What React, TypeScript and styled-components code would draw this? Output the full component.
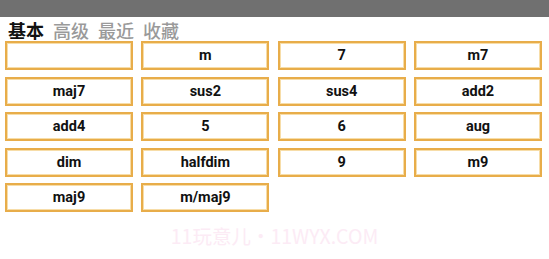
import React from "react";
import styled, { createGlobalStyle } from "styled-components";

const Global = createGlobalStyle`
  html, body { margin: 0; padding: 0; background: #ffffff; }
  body { font-family: Roboto, "Noto Sans CJK SC", "Noto Sans", sans-serif; }
`;

const Page = styled.div`
  width: 549px;
  height: 259px;
  display: flex;
  flex-direction: column;
  overflow: hidden;
`;

const TopBar = styled.div`
  height: 17px;
  background: #707070;
  flex: none;
`;

const Tabs = styled.div`
  display: flex;
  gap: 9px;
  padding: 2px 0 0 8px;
  height: 22px;
  align-items: center;
`;

const Tab = styled.span<{ $active?: boolean }>`
  font-family: "Noto Sans CJK SC", sans-serif;
  font-size: 18px;
  line-height: 22px;
  font-weight: ${(p) => (p.$active ? 700 : 500)};
  color: ${(p) => (p.$active ? "#111111" : "#9a9a9a")};
`;

const Grid = styled.div`
  display: grid;
  grid-template-columns: repeat(4, 1fr);
  grid-auto-rows: 29px;
  column-gap: 8.3px;
  row-gap: 6.5px;
  padding: 0 7px 0 5px;
`;

const ChordButton = styled.div`
  box-sizing: border-box;
  border: 2px solid #e8ad4a;
  box-shadow: inset 0 0 0 1px #f7dda8;
  background: #ffffff;
  display: flex;
  align-items: center;
  justify-content: center;
  font-family: Roboto, sans-serif;
  font-weight: 700;
  font-size: 14.5px;
  color: #111111;
`;

const Watermark = styled.div`
  margin-top: 12px;
  text-align: center;
  font-family: "Noto Sans CJK SC", sans-serif;
  font-size: 19.5px;
  line-height: 24px;
  color: #fcebf5;
`;

const chords = [
  "", "m", "7", "m7",
  "maj7", "sus2", "sus4", "add2",
  "add4", "5", "6", "aug",
  "dim", "halfdim", "9", "m9",
  "maj9", "m/maj9",
];

export default function App() {
  return (
    <Page>
      <Global />
      <TopBar />
      <Tabs>
        <Tab $active>基本</Tab>
        <Tab>高级</Tab>
        <Tab>最近</Tab>
        <Tab>收藏</Tab>
      </Tabs>
      <Grid>
        {chords.map((c, i) => (
          <ChordButton key={i}>{c}</ChordButton>
        ))}
      </Grid>
      <Watermark>11玩意儿・11WYX.COM</Watermark>
    </Page>
  );
}
